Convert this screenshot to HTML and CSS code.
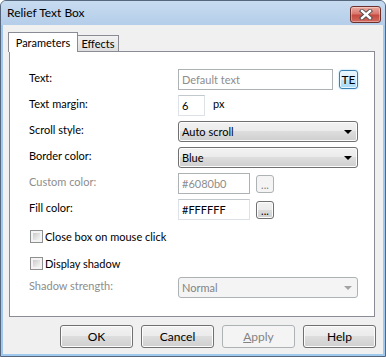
FILE: index.html
```html
<!DOCTYPE html>
<html>
<head>
	<meta charset="utf-8">
	<title>Relief Text Box</title>
	<link rel="stylesheet" href="styles.css">
</head>
<body>

<div class="window">
	<div class="titlebar">
		<span class="title">Relief Text Box</span>
		<div class="close">
			<svg width="16" height="11" viewBox="0 0 16 11">
				<path d="M4 2 L12 9 M12 2 L4 9" stroke="#4a4a4a" stroke-width="4.2" stroke-linecap="square" fill="none"/>
				<path d="M4 2 L12 9 M12 2 L4 9" stroke="#ffffff" stroke-width="2.4" stroke-linecap="square" fill="none"/>
			</svg>
		</div>
	</div>

	<div class="client">
		<div class="tabs">
			<div class="tab tab-active">Parameters</div>
			<div class="tab tab-effects">Effects</div>
		</div>

		<div class="panel">
			<div class="row">
				<span class="label">Text:</span>
				<div class="textbox is-disabled w-text">Default text</div>
				<div class="btn btn-small btn-hot">TE</div>
			</div>
			<div class="row">
				<span class="label">Text margin:</span>
				<div class="textbox w-margin">6</div>
				<span class="unit">px</span>
			</div>
			<div class="row">
				<span class="label">Scroll style:</span>
				<div class="btn select">Auto scroll<i class="arrow"></i></div>
			</div>
			<div class="row">
				<span class="label">Border color:</span>
				<div class="btn select">Blue<i class="arrow"></i></div>
			</div>
			<div class="row">
				<span class="label text-disabled">Custom color:</span>
				<div class="textbox is-disabled w-color">#6080b0</div>
				<div class="btn btn-small btn-dots is-disabled">...</div>
			</div>
			<div class="row">
				<span class="label">Fill color:</span>
				<div class="textbox w-color">#FFFFFF</div>
				<div class="btn btn-small btn-dots">...</div>
			</div>
			<div class="row row-check">
				<span class="checkbox"></span>
				<span>Close box on mouse click</span>
			</div>
			<div class="row row-check">
				<span class="checkbox"></span>
				<span>Display shadow</span>
			</div>
			<div class="row row-last">
				<span class="label text-disabled">Shadow strength:</span>
				<div class="btn select is-disabled">Normal<i class="arrow"></i></div>
			</div>
		</div>

		<div class="buttons">
			<div class="btn btn-dialog">OK</div>
			<div class="btn btn-dialog">Cancel</div>
			<div class="btn btn-dialog is-disabled"><u>A</u>pply</div>
			<div class="btn btn-dialog">Help</div>
		</div>
	</div>
</div>

</body>
</html>
```

FILE: styles.css
```css
body {
	margin: 0;
	font-family: Lato, 'Liberation Sans', sans-serif;
	font-size: 11px;
	color: #000000;
}

.window {
	width: 386px;
	height: 357px;
	box-sizing: border-box;
	border: 1px solid #56667c;
	border-radius: 6px 6px 0 0;
	background-color: #9fc9ee;
	display: flex;
	flex-direction: column;
	overflow: hidden;
}

.titlebar {
	flex: none;
	height: 24px;
	display: flex;
	align-items: flex-start;
	justify-content: space-between;
	background: linear-gradient(#c8dcf0, #b4cde9);
}

.title {
	margin: 5px 0 0 6px;
	font-size: 12px;
	line-height: 14px;
}

.close {
	margin: 5px 4px 0 0;
	width: 31px;
	height: 17px;
	box-sizing: border-box;
	border: 1px solid #6e302b;
	border-radius: 3px;
	background: linear-gradient(#eaaaa0, #d8786e 45%, #c54a40 55%, #d16a5f);
	box-shadow: inset 0 0 0 1px rgba(255,255,255,.35);
	display: flex;
	align-items: center;
	justify-content: center;
}

.client {
	flex: 1;
	margin: 0 2px 2px;
	padding: 7px 8px 0 6px;
	background-color: #f0f0f0;
	display: flex;
	flex-direction: column;
}

/* tabs */
.tabs {
	display: flex;
	align-items: flex-end;
	height: 19px;
	flex: none;
}

.tab {
	box-sizing: border-box;
	height: 16px;
	border: 1px solid #898c95;
	border-bottom: none;
	background: linear-gradient(#f2f2f2, #dedede);
	line-height: 15px;
	text-align: center;
	z-index: 1;
}

.tab-active {
	height: 20px;
	width: 70px;
	margin: 0 0 -1px -1px;
	background: #ffffff;
	line-height: 19px;
	z-index: 3;
}

.tab-effects {
	width: 42px;
	margin-left: -1px;
}

.panel {
	flex: none;
	height: 266px;
	box-sizing: border-box;
	border: 1px solid #898c95;
	background-color: #ffffff;
	padding: 17px 0 0 19px;
	display: flex;
	flex-direction: column;
}

.row {
	display: flex;
	align-items: center;
	height: 21px;
	margin-top: 5px;
}

.row:first-child {
	margin-top: 0;
}

.row-check {
	margin-top: 6px;
	padding-left: 1px;
	gap: 2px;
}

.row-last {
	margin-top: 3px;
}

.label {
	flex: none;
	width: 149px;
	padding-bottom: 5px;
}

.text-disabled {
	color: #8d8d8d;
}

/* text boxes */
.textbox {
	box-sizing: border-box;
	height: 21px;
	border: 1px solid #dde2e8;
	border-top-color: #c3c8cf;
	padding-left: 3px;
	line-height: 19px;
	background-color: #ffffff;
	white-space: nowrap;
	overflow: hidden;
}

.textbox.is-disabled {
	border-color: #adb2b5;
	color: #8d8d8d;
}

.w-text {
	width: 155px;
}

.w-margin {
	width: 27px;
}

.w-color {
	width: 72px;
}

.unit {
	margin-left: 8px;
	padding-bottom: 5px;
}

/* buttons */
.btn {
	box-sizing: border-box;
	border: 1px solid #707070;
	border-radius: 3px;
	background: linear-gradient(#f2f2f2 0%, #ebebeb 50%, #dddddd 50%, #cfcfcf 100%);
	box-shadow: inset 0 0 0 1px #fcfcfc;
	display: flex;
	align-items: center;
	justify-content: center;
}

.btn.is-disabled {
	border-color: #adb2b5;
	background: #f4f4f4;
	box-shadow: none;
	color: #838383;
}

.btn-small {
	margin-left: 6px;
	width: 18px;
	height: 18px;
}

.btn-hot {
	width: 19px;
	height: 19px;
	font-size: 12px;
	border-color: #3c7fb1;
	background: linear-gradient(#eaf6fd 0%, #d9f0fc 50%, #bee6fd 50%, #a7d9f5 100%);
	box-shadow: inset 0 0 0 1px #e8f6fe, 0 0 2px #8fd0f5;
}

.btn-dots {
	align-items: flex-end;
	line-height: 14px;
}

.select {
	width: 180px;
	height: 21px;
	justify-content: space-between;
	padding: 0 5px 0 3px;
}

.arrow {
	width: 0;
	height: 0;
	border-top: 4px solid #000000;
	border-left: 4px solid transparent;
	border-right: 4px solid transparent;
}

.select.is-disabled .arrow {
	border-top-color: #a3a3a3;
}

.checkbox {
	width: 13px;
	height: 13px;
	box-sizing: border-box;
	border: 1px solid #8e8f8f;
	padding: 2px;
	background: linear-gradient(135deg, #cbcbcb, #f6f6f6) content-box, #f4f4f4;
}

.buttons {
	display: flex;
	justify-content: flex-end;
	gap: 8px;
	margin: 8px -1px 0 0;
}

.btn-dialog {
	width: 73px;
	height: 23px;
	font-size: 12px;
}
```
